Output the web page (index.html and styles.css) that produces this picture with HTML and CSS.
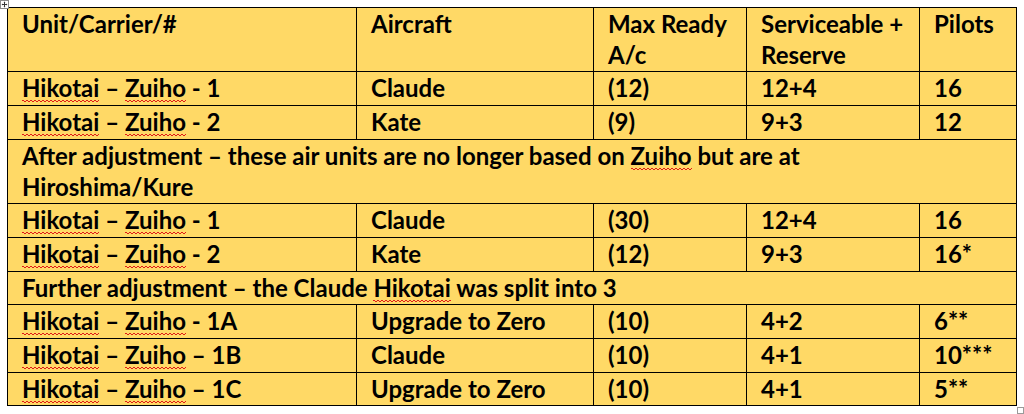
FILE: index.html
```html
<!DOCTYPE html>
<html>
<head>
<meta charset="utf-8">
<link rel="stylesheet" href="styles.css">
</head>
<body>
<div class="page">
  <span class="move-handle"><svg width="9" height="9" viewBox="0 0 9 9"><rect x="0.5" y="0.5" width="8" height="8" fill="#fff" stroke="#8a8a8a"/><path d="M4.5 2v5M2 4.5h5" stroke="#333" stroke-width="1"/><path d="M4.5 1.6l-1 1h2zM4.5 7.4l-1-1h2zM1.6 4.5l1-1v2zM7.4 4.5l-1-1v2z" fill="#333"/></svg></span>
  <table class="grid">
    <colgroup>
      <col class="c1"><col class="c2"><col class="c3"><col class="c4"><col class="c5">
    </colgroup>
    <tr>
      <td>Unit/Carrier/#</td><td>Aircraft</td><td>Max Ready A/c</td><td>Serviceable + Reserve</td><td>Pilots</td>
    </tr>
    <tr>
      <td><span class="sp">Hikotai</span> – <span class="sp">Zuiho</span> - 1</td><td>Claude</td><td>(12)</td><td>12+4</td><td>16</td>
    </tr>
    <tr>
      <td><span class="sp">Hikotai</span> – <span class="sp">Zuiho</span> - 2</td><td>Kate</td><td>(9)</td><td>9+3</td><td>12</td>
    </tr>
    <tr>
      <td colspan="5">After adjustment – these air units are no longer based on <span class="sp">Zuiho</span> but are at<br>Hiroshima/Kure</td>
    </tr>
    <tr>
      <td><span class="sp">Hikotai</span> – <span class="sp">Zuiho</span> - 1</td><td>Claude</td><td>(30)</td><td>12+4</td><td>16</td>
    </tr>
    <tr>
      <td><span class="sp">Hikotai</span> – <span class="sp">Zuiho</span> - 2</td><td>Kate</td><td>(12)</td><td>9+3</td><td>16*</td>
    </tr>
    <tr>
      <td colspan="5">Further adjustment – the Claude <span class="sp">Hikotai</span> was split into 3</td>
    </tr>
    <tr>
      <td><span class="sp">Hikotai</span> – <span class="sp">Zuiho</span> - 1A</td><td>Upgrade to Zero</td><td>(10)</td><td>4+2</td><td>6**</td>
    </tr>
    <tr>
      <td><span class="sp">Hikotai</span> – <span class="sp">Zuiho</span> – 1B</td><td>Claude</td><td>(10)</td><td>4+1</td><td>10***</td>
    </tr>
    <tr>
      <td><span class="sp">Hikotai</span> – <span class="sp">Zuiho</span> – 1C</td><td>Upgrade to Zero</td><td>(10)</td><td>4+1</td><td>5**</td>
    </tr>
  </table>
  <span class="resize-handle"></span>
</div>
</body>
</html>
```
FILE: styles.css
```css
html, body {
  margin: 0;
  padding: 0;
  background: #ffffff;
}
.page {
  position: relative;
  width: 1024px;
  height: 414px;
  padding: 7px 0 0 7px;
  box-sizing: border-box;
}
.move-handle {
  position: absolute;
  left: 0;
  top: 0;
  width: 9px;
  height: 9px;
  line-height: 0;
}
.resize-handle {
  position: absolute;
  left: 1017px;
  top: 407px;
  width: 5px;
  height: 5px;
  border: 1px solid #9a9a9a;
  background: #fff;
}
.grid {
  border-collapse: collapse;
  table-layout: fixed;
  width: 1009px;
  background: #ffd966;
  font-family: Lato, "Open Sans", sans-serif;
  font-weight: 700;
  font-size: 24px;
  line-height: 30.7px;
  color: #000;
}
.c1 { width: 349px; }
.c2 { width: 237px; }
.c3 { width: 153px; }
.c4 { width: 173px; }
.c5 { width: 97px; }
.grid td {
  border: 1px solid #000;
  padding: 1px 10px 1px 14px;
  vertical-align: top;
  text-align: left;
}
.sp {
  background-image:
    linear-gradient(45deg, transparent 35%, #e01818 35%, #e01818 65%, transparent 65%),
    linear-gradient(135deg, transparent 35%, #e01818 35%, #e01818 65%, transparent 65%);
  background-size: 4px 2px, 4px 2px;
  background-position: 0 100%, 2px 100%;
  background-repeat: repeat-x;
}
```
